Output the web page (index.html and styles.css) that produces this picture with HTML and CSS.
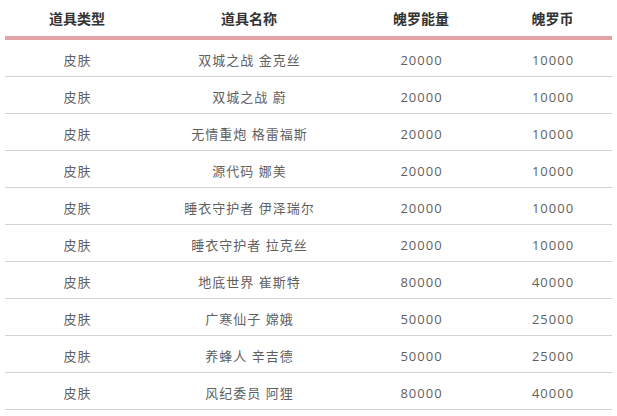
FILE: index.html
```html
<!DOCTYPE html>
<html lang="zh-CN">
<head>
<meta charset="utf-8">
<title>道具</title>
<link rel="stylesheet" href="styles.css">
</head>
<body>
<table class="items">
  <colgroup>
    <col class="c1"><col class="c2"><col class="c3"><col class="c4">
  </colgroup>
  <thead>
    <tr><th>道具类型</th><th>道具名称</th><th>魄罗能量</th><th>魄罗币</th></tr>
  </thead>
  <tbody>
    <tr><td>皮肤</td><td>双城之战 金克丝</td><td>20000</td><td>10000</td></tr>
    <tr><td>皮肤</td><td>双城之战 蔚</td><td>20000</td><td>10000</td></tr>
    <tr><td>皮肤</td><td>无情重炮 格雷福斯</td><td>20000</td><td>10000</td></tr>
    <tr><td>皮肤</td><td>源代码 娜美</td><td>20000</td><td>10000</td></tr>
    <tr><td>皮肤</td><td>睡衣守护者 伊泽瑞尔</td><td>20000</td><td>10000</td></tr>
    <tr><td>皮肤</td><td>睡衣守护者 拉克丝</td><td>20000</td><td>10000</td></tr>
    <tr><td>皮肤</td><td>地底世界 崔斯特</td><td>80000</td><td>40000</td></tr>
    <tr><td>皮肤</td><td>广寒仙子 嫦娥</td><td>50000</td><td>25000</td></tr>
    <tr><td>皮肤</td><td>养蜂人 辛吉德</td><td>50000</td><td>25000</td></tr>
    <tr><td>皮肤</td><td>风纪委员 阿狸</td><td>80000</td><td>40000</td></tr>
  </tbody>
</table>
</body>
</html>
```
FILE: styles.css
```css
html, body {
  margin: 0;
  padding: 0;
  background: #ffffff;
}
body {
  padding: 0 5px;
  font-family: "Noto Sans CJK SC", "Noto Sans", sans-serif;
}
.items {
  width: 607px;
  border-collapse: collapse;
  table-layout: fixed;
}
.c1 { width: 144px; }
.c2 { width: 200px; }
.c3 { width: 144px; }
.c4 { width: 119px; }
.items th {
  height: 36px;
  padding: 0;
  font-size: 14px;
  font-weight: bold;
  line-height: 36px;
  color: #333333;
  text-align: center;
  vertical-align: middle;
  border-bottom: 4px solid #e3a2a4;
}
.items td {
  padding: 9px 0 5px 1px;
  line-height: 22px;
  font-family: "Open Sans", "Noto Sans CJK SC", sans-serif;
  font-size: 13px;
  letter-spacing: 1px;
  color: #5f5f5f;
  text-align: center;
  vertical-align: middle;
  border-bottom: 1px solid #d4d4d4;
}
```
